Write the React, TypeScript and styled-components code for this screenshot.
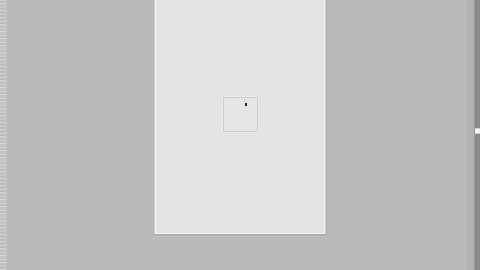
import React from "react";
import styled, { createGlobalStyle } from "styled-components";

const Global = createGlobalStyle`
  html, body { margin: 0; padding: 0; width: 480px; height: 270px; overflow: hidden; background: #b9b9b9; font-family: "Liberation Sans", Arial, sans-serif; }
  #root { width: 480px; height: 270px; }
`;

const Workspace = styled.div`
  display: flex;
  width: 480px;
  height: 270px;
  background: #b9b9b9;
`;

const Ruler = styled.div`
  width: 6px;
  flex: none;
  background:
    repeating-linear-gradient(180deg, #cfcfcf 0 1px, #bdbdbd 1px 3px, #d6d6d6 3px 4px, #c2c2c2 4px 7px);
  border-right: 1px solid #c4c4c4;
`;

const Canvas = styled.div`
  flex: 1;
  display: flex;
  justify-content: flex-start;
  align-items: flex-start;
  padding-left: 146px;
`;

const Page = styled.div`
  width: 172px;
  background: #e4e4e4;
  border: 1px solid #c2adb3;
  border-top: none;
  box-shadow: inset 1px 0 0 #d9cfd2, inset 2px 0 0 #f4f4f4, inset -1px 0 0 #d6c8cc, inset -2px 0 0 #f6f6f6,
    inset 0 -1px 0 #f0f0f0,
    0 1px 0 #a8a8a8, 0 2px 0 #c9c9c9, 0 3px 0 #adadad, 0 4px 0 #c4c4c4;
  display: flex;
  justify-content: center;
  padding-top: 97px;
  box-sizing: content-box;
  height: 137px;
`;

const Frame = styled.div`
  position: relative;
  width: 33px;
  height: 33px;
  border: 1px solid #cdcdcd;
  box-shadow: 0 0 0 1px #ebebeb;
  background: #e6e6e6;
`;

const Caret = styled.svg`
  position: absolute;
  left: 19px;
  top: 1px;
`;

const Scrollbar = styled.div`
  width: 14px;
  flex: none;
  display: flex;
  flex-direction: column;
  justify-content: center;
  background: linear-gradient(90deg, #b9b9b9 0 1px, #b2b2b2 1px 8px, #9a9a9a 8px 9px, #8a8a8a 9px 14px);
`;

const Thumb = styled.div`
  margin-left: 9px;
  margin-top: -8px;
  width: 5px;
  height: 4px;
  background: #f2f2f2;
  border-top: 1px solid #cfcfcf;
  border-bottom: 1px solid #cfcfcf;
`;

export default function App() {
  return (
    <>
      <Global />
      <Workspace>
        <Ruler />
        <Canvas>
          <Page>
            <Frame>
              <Caret width="6" height="9" viewBox="0 0 6 9">
                <rect x="1" y="0" width="1" height="3" fill="#c8c8c8" />
                <rect x="2" y="4" width="2" height="3" fill="#222" />
              </Caret>
            </Frame>
          </Page>
        </Canvas>
        <Scrollbar>
          <Thumb />
        </Scrollbar>
      </Workspace>
    </>
  );
}
